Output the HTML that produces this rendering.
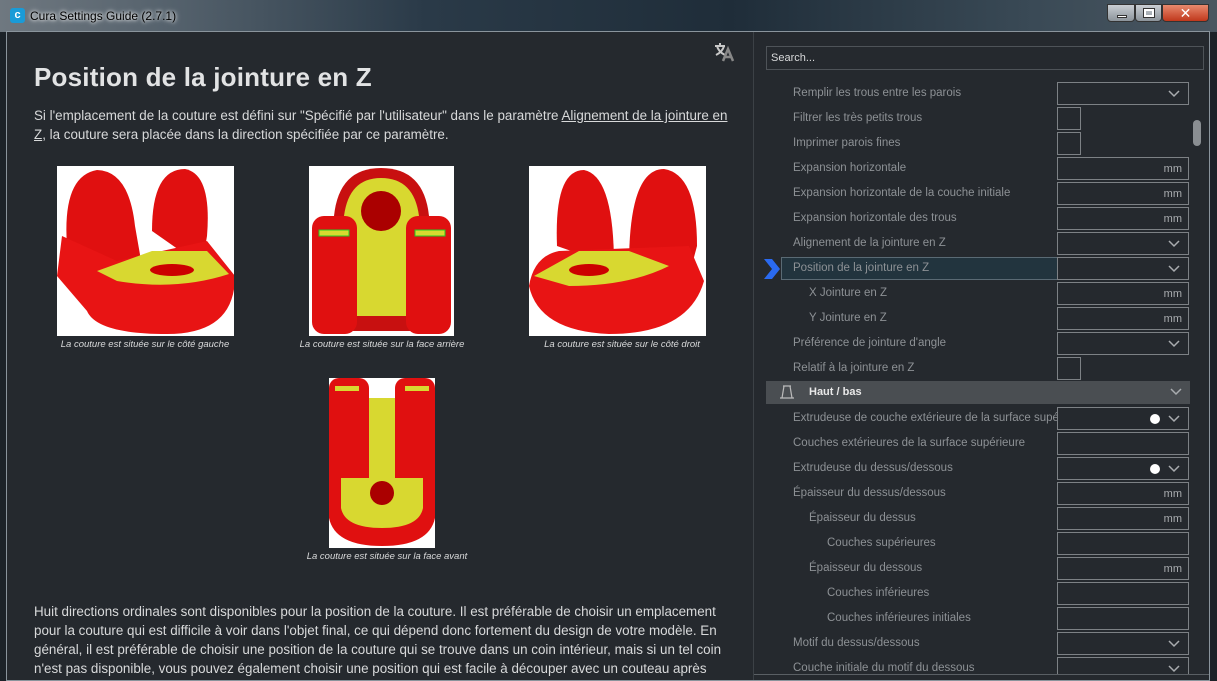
<!DOCTYPE html>
<html><head><meta charset="utf-8"><style>
*{margin:0;padding:0;box-sizing:border-box}
body{width:1217px;height:681px;overflow:hidden;background:#1c2228;font-family:"Liberation Sans","DejaVu Sans",sans-serif;position:relative}
.title{position:absolute;left:0;top:0;width:1217px;height:32px;background:linear-gradient(90deg,#6f7880 0,#53606b 15%,#2a3a48 35%,#1f2d39 60%,#3a4a56 85%,#4a5660 100%)}
.title .t{position:absolute;left:30px;top:9px;font-size:12px;color:#000;text-shadow:0 0 6px #fff,0 0 3px #fff}
.logo{position:absolute;left:10px;top:8px;width:15px;height:15px;background:#1a9bd7;border-radius:3px;color:#fff;font-weight:bold;font-size:11px;text-align:center;line-height:15px}
.wbtn{position:absolute;top:4px;height:18px;border:1px solid #333;border-radius:0 0 4px 4px}
.frame{position:absolute;left:6px;top:31px;width:1204px;height:650px;background:#25292e;border:1px solid #8a949c}
.left{position:absolute;left:0;top:0;width:746px;height:648px;color:#d4d6d8}
h1{position:absolute;left:27px;top:30px;font-size:26px;font-weight:bold;color:#e2e3e4;letter-spacing:.2px}
p{font-size:13.4px;line-height:19px;color:#d8d9da;white-space:nowrap}
.cap{position:absolute;font-size:9.5px;font-style:italic;color:#d8d9da;white-space:nowrap;text-align:center}
.img{position:absolute;background:#fff}
.right{position:absolute;left:746px;top:0;width:456px;height:648px;border-left:1px solid #3c4146;overflow:hidden}
.search{position:absolute;left:12px;top:14px;width:438px;height:24px;border:1px solid #4e5358;font-size:11px;color:#d8d9da;padding:5px 4px}
.r{position:absolute;left:0;width:440px;height:25px}
.r .l{position:absolute;left:39px;top:6px;font-size:11.5px;color:#8d9195;white-space:nowrap}
.r .b{position:absolute;z-index:2;left:303px;top:1px;width:132px;height:23px;border:1px solid #7d8185;background:#25292e;font-size:11px;color:#a9acaf;text-align:right;padding:5px 6px}
.r .c{position:absolute;left:303px;top:1px;width:24px;height:23px;border:1px solid #7d8185}
.chev{position:absolute;right:8px;top:7px;width:12px;height:8px}
.dot{position:absolute;right:28px;top:6px;width:10px;height:10px;border-radius:50%;background:#fff}
.scroll{position:absolute;left:1193px;top:120px;width:8px;height:26px;background:#8a8e92;border-radius:4px}
</style></head><body>
<div class="title"><div class="logo">c</div><div class="t">Cura Settings Guide (2.7.1)</div>
<div class="wbtn" style="left:1107px;width:28px;background:linear-gradient(#c9ced3,#8c949b)"><div style="position:absolute;left:9px;top:10px;width:10px;height:3px;background:#fff;border:1px solid #333"></div></div>
<div class="wbtn" style="left:1135px;width:27px;background:linear-gradient(#c9ced3,#8c949b)"><div style="position:absolute;left:8px;top:4px;width:10px;height:8px;border:2px solid #fff;outline:1px solid #333"></div></div>
<div class="wbtn" style="left:1162px;width:47px;background:linear-gradient(#e88a6e,#c0381c);color:#fff;font-weight:bold;text-align:center;font-size:14px;line-height:16px">✕</div>
</div>
<div class="frame">
<div class="left">
<svg style="position:absolute;left:706px;top:9px" width="22" height="22" viewBox="0 0 22 22"><path d="M2 5h10M7 2v3M4 5c1 4 4 7 8 9M11 5c-1 4-4 7-8 9" stroke="#c8c8c8" stroke-width="2" fill="none"/><path d="M10 20l5-12 5 12M12 16h6" stroke="#888" stroke-width="2.5" fill="none"/></svg>
<h1>Position de la jointure en Z</h1>
<p style="position:absolute;left:27px;top:74px">Si l'emplacement de la couture est défini sur "Spécifié par l'utilisateur" dans le paramètre <u>Alignement de la jointure en</u><br><u>Z</u>, la couture sera placée dans la direction spécifiée par ce paramètre.</p>
<div class="img" style="left:50px;top:134px;width:177px;height:170px"><svg width="177" height="170"><path d="M10 80 Q5 10 40 4 Q72 5 78 60 L85 100 L30 105Z" fill="#e01010"/><path d="M95 65 Q95 3 128 3 Q155 8 150 70 L145 100 Z" fill="#e01010"/><path d="M0 110 L5 70 L60 95 L150 75 L178 110 Q178 168 110 168 Q40 168 30 145 Z" fill="#e81414"/><path d="M40 105 L95 85 L150 85 L172 108 Q120 125 60 115 Z" fill="#d8d830"/><ellipse cx="115" cy="104" rx="22" ry="6" fill="#c00"/></svg></div>
<div class="img" style="left:302px;top:134px;width:145px;height:170px"><svg width="145" height="170"><path d="M25 50 Q30 2 72 2 Q115 2 120 50 L120 165 L25 165Z" fill="#c81010"/><path d="M35 50 Q40 12 72 12 Q105 12 110 50 L100 150 L45 150Z" fill="#d8d830"/><ellipse cx="72" cy="45" rx="20" ry="20" fill="#a00"/><rect x="3" y="50" width="45" height="118" rx="12" fill="#e01010"/><rect x="97" y="50" width="45" height="118" rx="12" fill="#e01010"/><rect x="10" y="64" width="30" height="6" fill="#d8d830" stroke="#2c2"/><rect x="106" y="64" width="30" height="6" fill="#d8d830" stroke="#2c2"/></svg></div>
<div class="img" style="left:522px;top:134px;width:177px;height:170px"><svg width="177" height="170"><path d="M28 80 Q25 4 55 4 Q85 10 85 100 Z" fill="#e01010"/><path d="M100 100 Q100 3 135 3 Q168 8 168 80 L160 110Z" fill="#e01010"/><path d="M0 120 Q5 90 30 85 L160 80 L175 115 Q160 168 80 168 Q10 165 0 120Z" fill="#e81414"/><path d="M5 110 L50 85 L100 85 L140 100 Q100 120 40 120 Z" fill="#d8d830"/><ellipse cx="60" cy="104" rx="20" ry="6" fill="#c00"/></svg></div>
<div class="img" style="left:322px;top:346px;width:106px;height:170px"><svg width="106" height="170"><rect x="0" y="0" width="40" height="110" rx="10" fill="#e01010"/><rect x="66" y="0" width="40" height="110" rx="10" fill="#e01010"/><path d="M0 90 L106 90 L106 140 Q100 168 53 168 Q6 168 0 140Z" fill="#e01010"/><path d="M12 100 L94 100 L94 130 Q90 150 53 150 Q16 150 12 130Z" fill="#d8d830"/><path d="M40 20 L66 20 L66 100 L40 100Z" fill="#d8d830"/><circle cx="53" cy="115" r="12" fill="#a00"/><rect x="6" y="8" width="24" height="5" fill="#d8d830"/><rect x="76" y="8" width="24" height="5" fill="#d8d830"/></svg></div>
<div class="cap" style="left:38px;top:307px;width:200px">La couture est située sur le côté gauche</div>
<div class="cap" style="left:270px;top:307px;width:210px">La couture est située sur la face arrière</div>
<div class="cap" style="left:510px;top:307px;width:210px">La couture est située sur le côté droit</div>
<div class="cap" style="left:265px;top:519px;width:230px">La couture est située sur la face avant</div>
<p style="position:absolute;left:27px;top:570px">Huit directions ordinales sont disponibles pour la position de la couture. Il est préférable de choisir un emplacement<br>pour la couture qui est difficile à voir dans l'objet final, ce qui dépend donc fortement du design de votre modèle. En<br>général, il est préférable de choisir une position de la couture qui se trouve dans un coin intérieur, mais si un tel coin<br>n'est pas disponible, vous pouvez également choisir une position qui est facile à découper avec un couteau après</p>
</div>
<div class="right">
<div class="search">Search...</div>
<svg width="0" height="0" style="position:absolute"><defs><path id="cv" d="M1 1l5 5 5-5" stroke="#a9acaf" stroke-width="1.5" fill="none"/></defs></svg>
<div class="r" style="top:49px"><div class="l">Remplir les trous entre les parois</div><div class="b"><svg class="chev"><use href="#cv"/></svg></div></div>
<div class="r" style="top:74px"><div class="l">Filtrer les très petits trous</div><div class="c"></div></div>
<div class="r" style="top:99px"><div class="l">Imprimer parois fines</div><div class="c"></div></div>
<div class="r" style="top:124px"><div class="l">Expansion horizontale</div><div class="b">mm</div></div>
<div class="r" style="top:149px"><div class="l">Expansion horizontale de la couche initiale</div><div class="b">mm</div></div>
<div class="r" style="top:174px"><div class="l">Expansion horizontale des trous</div><div class="b">mm</div></div>
<div class="r" style="top:199px"><div class="l">Alignement de la jointure en Z</div><div class="b"><svg class="chev"><use href="#cv"/></svg></div></div>
<div style="position:absolute;left:27px;top:225px;width:280px;height:23px;background:#22343e;border:1px solid #5a6a74;border-right:none"></div>
<svg style="position:absolute;left:8px;top:226px" width="20" height="22"><path d="M2 1h8l8 10-8 10H2l8-10z" fill="#2a6af0"/></svg>
<div class="r" style="top:224px"><div class="l">Position de la jointure en Z</div><div class="b"><svg class="chev"><use href="#cv"/></svg></div></div>
<div class="r" style="top:249px"><div class="l" style="left:55px">X Jointure en Z</div><div class="b">mm</div></div>
<div class="r" style="top:274px"><div class="l" style="left:55px">Y Jointure en Z</div><div class="b">mm</div></div>
<div class="r" style="top:299px"><div class="l">Préférence de jointure d'angle</div><div class="b"><svg class="chev"><use href="#cv"/></svg></div></div>
<div class="r" style="top:324px"><div class="l">Relatif à la jointure en Z</div><div class="c"></div></div>
<div style="position:absolute;left:12px;top:349px;width:424px;height:23px;background:#4a4e52"><svg style="position:absolute;left:13px;top:4px" width="16" height="15"><path d="M4 1h8M5 1L3 13M11 1l2 12M1 13h14" stroke="#bbb" stroke-width="1.2" fill="none"/></svg><span style="position:absolute;left:43px;top:5px;font-size:11px;font-weight:bold;color:#e8e8e8">Haut / bas</span><svg class="chev"><use href="#cv" stroke="#ddd"/></svg></div>
<div class="r" style="top:374px"><div class="l">Extrudeuse de couche extérieure de la surface supé</div><div class="b"><span class="dot"></span><svg class="chev"><use href="#cv"/></svg></div></div>
<div class="r" style="top:399px"><div class="l">Couches extérieures de la surface supérieure</div><div class="b"></div></div>
<div class="r" style="top:424px"><div class="l">Extrudeuse du dessus/dessous</div><div class="b"><span class="dot"></span><svg class="chev"><use href="#cv"/></svg></div></div>
<div class="r" style="top:449px"><div class="l">Épaisseur du dessus/dessous</div><div class="b">mm</div></div>
<div class="r" style="top:474px"><div class="l" style="left:55px">Épaisseur du dessus</div><div class="b">mm</div></div>
<div class="r" style="top:499px"><div class="l" style="left:73px">Couches supérieures</div><div class="b"></div></div>
<div class="r" style="top:524px"><div class="l" style="left:55px">Épaisseur du dessous</div><div class="b">mm</div></div>
<div class="r" style="top:549px"><div class="l" style="left:73px">Couches inférieures</div><div class="b"></div></div>
<div class="r" style="top:574px"><div class="l" style="left:73px">Couches inférieures initiales</div><div class="b"></div></div>
<div class="r" style="top:599px"><div class="l">Motif du dessus/dessous</div><div class="b"><svg class="chev"><use href="#cv"/></svg></div></div>
<div class="r" style="top:624px"><div class="l">Couche initiale du motif du dessous</div><div class="b"><svg class="chev"><use href="#cv"/></svg></div></div>
<div style="position:absolute;z-index:3;left:0;top:642px;width:456px;height:6px;background:#25292e;border-top:1px solid #5a5f64"></div>
</div>
</div>
<div class="scroll"></div>
</body></html>
